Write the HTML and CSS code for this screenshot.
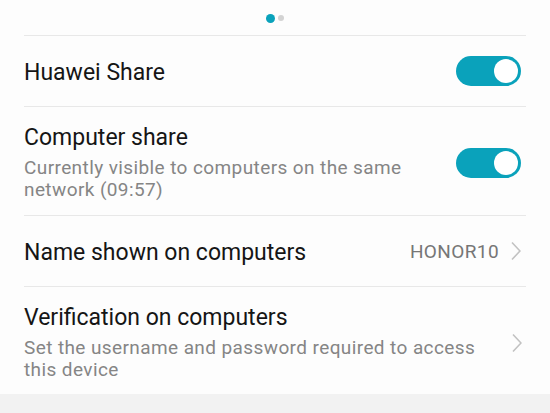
FILE: index.html
```html
<!DOCTYPE html>
<html>
<head>
<meta charset="utf-8">
<link rel="stylesheet" href="styles.css">
</head>
<body>
<div class="screen">
  <div class="pager">
    <span class="dot dot-active"></span>
    <span class="dot"></span>
  </div>
  <div class="list">
    <div class="row row-single">
      <div class="text"><div class="title">Huawei Share</div></div>
      <div class="switch"><span class="knob"></span></div>
    </div>
    <div class="row row-double">
      <div class="text">
        <div class="title">Computer share</div>
        <div class="subtitle">Currently visible to computers on the same network (09:57)</div>
      </div>
      <div class="switch"><span class="knob"></span></div>
    </div>
    <div class="row row-single">
      <div class="text"><div class="title">Name shown on computers</div></div>
      <span class="value">HONOR10</span>
      <svg class="chevron" width="10" height="20" viewBox="0 0 10 20"><polyline points="1,1.5 9,10 1,18.5" fill="none" stroke="#c2c2c2" stroke-width="1.6"/></svg>
    </div>
    <div class="row row-double row-last">
      <div class="text text-wide">
        <div class="title">Verification on computers</div>
        <div class="subtitle">Set the username and password required to access this device</div>
      </div>
      <svg class="chevron" width="10" height="20" viewBox="0 0 10 20"><polyline points="1,1.5 9,10 1,18.5" fill="none" stroke="#c2c2c2" stroke-width="1.6"/></svg>
    </div>
  </div>
  <div class="footer"></div>
</div>
</body>
</html>
```

FILE: styles.css
```css
* { box-sizing: border-box; }
html, body { margin: 0; padding: 0; }
body {
  width: 550px;
  height: 413px;
  overflow: hidden;
  background: #fdfdfd;
  font-family: Roboto, "Noto Sans", sans-serif;
}
.screen { display: flex; flex-direction: column; height: 413px; }
.pager {
  height: 35px;
  display: flex;
  align-items: center;
  justify-content: center;
  gap: 3px;
  padding-top: 1px;
}
.dot {
  width: 6px;
  height: 6px;
  border-radius: 50%;
  background: #d3d3d3;
}
.dot-active {
  width: 9px;
  height: 9px;
  background: #0aa2bb;
}
.list { margin: 0 24px; }
.row {
  display: flex;
  align-items: center;
  border-top: 1px solid #e8e8e8;
  padding-right: 5px;
}
.row-single { height: 71px; }
.row-single .text { padding-top: 3px; }
.row-double { padding-top: 18px; padding-bottom: 14px; }
.row-last { padding-bottom: 13px; padding-right: 4px; }
.text { flex: 1; min-width: 0; padding-right: 24px; }
.text-wide { padding-right: 20px; }
.title {
  font-size: 23px;
  line-height: 26px;
  color: #151515;
}
.subtitle {
  margin-top: 6px;
  font-size: 19px;
  line-height: 22px;
  letter-spacing: 0.4px;
  color: #858585;
}
.switch {
  width: 65px;
  height: 30px;
  border-radius: 15px;
  background: #0aa2bb;
  display: flex;
  align-items: center;
  justify-content: flex-end;
  padding-right: 3px;
  flex: none;
}
.knob {
  width: 24px;
  height: 24px;
  border-radius: 50%;
  background: #ffffff;
}
.value {
  font-size: 19px;
  letter-spacing: 0.4px;
  color: #767676;
  margin-right: 12px;
}
.chevron { flex: none; display: block; }
.footer { flex: 1; background: #f2f2f2; }
```
